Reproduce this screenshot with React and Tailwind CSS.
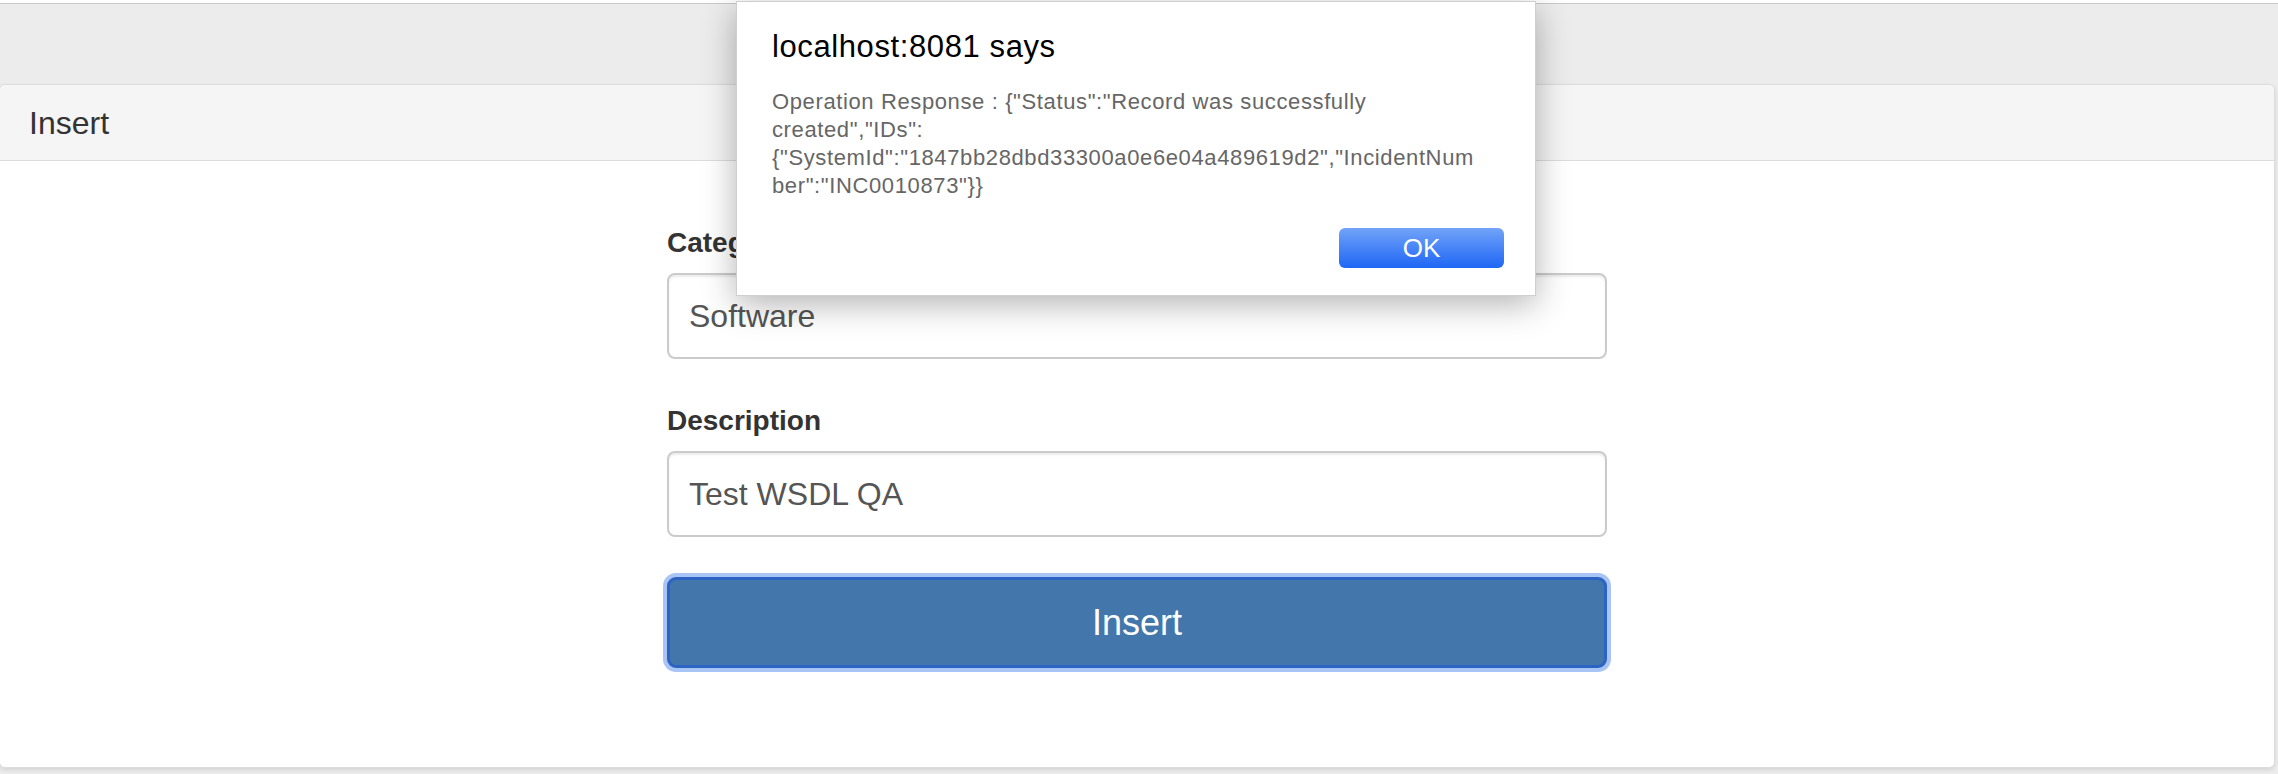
export default function App() {
  return (
    <div className="relative h-[774px] w-full overflow-hidden bg-white font-['Liberation_Sans',Arial,sans-serif]">
      <div className="mt-[3px] h-[771px] border-t border-[#c8c8c8] bg-[#ececec] pt-[80px]">
        <section className="ml-[-1px] mr-[3px] rounded-[6px] border border-[#dddddd] bg-white shadow-[0_2px_4px_rgba(0,0,0,0.1)]">
          <div className="flex h-[76px] items-center rounded-t-[6px] border-b border-[#dddddd] bg-[#f5f5f5] px-[29px]">
            <h3 className="text-[32px] text-[#333333]">Insert</h3>
          </div>
          <div className="h-[606px] pt-[62px]">
            <form className="mx-auto w-[940px]" onSubmit={(event) => event.preventDefault()}>
              <div className="mb-[42px]">
                <label className="mb-[10px] block text-[28px] font-bold leading-[40px] text-[#333333]">Category</label>
                <input
                  readOnly
                  value="Software"
                  className="block h-[86px] w-full rounded-[8px] border-2 border-[#cbcbcb] px-[20px] text-[32px] text-[#555555] shadow-[inset_0_2px_2px_rgba(0,0,0,0.075)] outline-none"
                />
              </div>
              <div className="mb-[40px]">
                <label className="mb-[10px] block text-[28px] font-bold leading-[40px] text-[#333333]">Description</label>
                <input
                  readOnly
                  value="Test WSDL QA"
                  className="block h-[86px] w-full rounded-[8px] border-2 border-[#cbcbcb] px-[20px] text-[32px] text-[#555555] shadow-[inset_0_2px_2px_rgba(0,0,0,0.075)] outline-none"
                />
              </div>
              <button
                type="submit"
                className="block h-[91px] w-full rounded-[9px] border-[3px] border-[#2d63c2] bg-[#4376ab] text-[36px] text-white shadow-[0_0_0_4px_#a8c5f6]"
              >
                Insert
              </button>
            </form>
          </div>
        </section>
      </div>

      {/* browser alert */}
      <div className="absolute left-[736px] top-[1px] h-[295px] w-[800px] border border-[#cfcfcf] bg-white pl-[35px] pr-[31px] pt-[27px] shadow-[0_8px_32px_rgba(0,0,0,0.3)]">
        <p className="text-[31px] leading-[36px] tracking-[0.6px] text-black">localhost:8081 says</p>
        <p className="mt-[23px] text-[22px] leading-[28px] tracking-[0.62px] text-[#666666]">
          <span className="block">Operation Response : {'{"Status":"Record was successfully'}</span>
          <span className="block">{'created","IDs":'}</span>
          <span className="block">{'{"SystemId":"1847bb28dbd33300a0e6e04a489619d2","IncidentNum'}</span>
          <span className="block">{'ber":"INC0010873"}}'}</span>
        </p>
        <div className="mt-[28px] flex justify-end">
          <button className="h-[40px] w-[165px] rounded-[6px] bg-[linear-gradient(#72a3f8,#1e66f5)] text-[26px] text-white">
            OK
          </button>
        </div>
      </div>
    </div>
  );
}
